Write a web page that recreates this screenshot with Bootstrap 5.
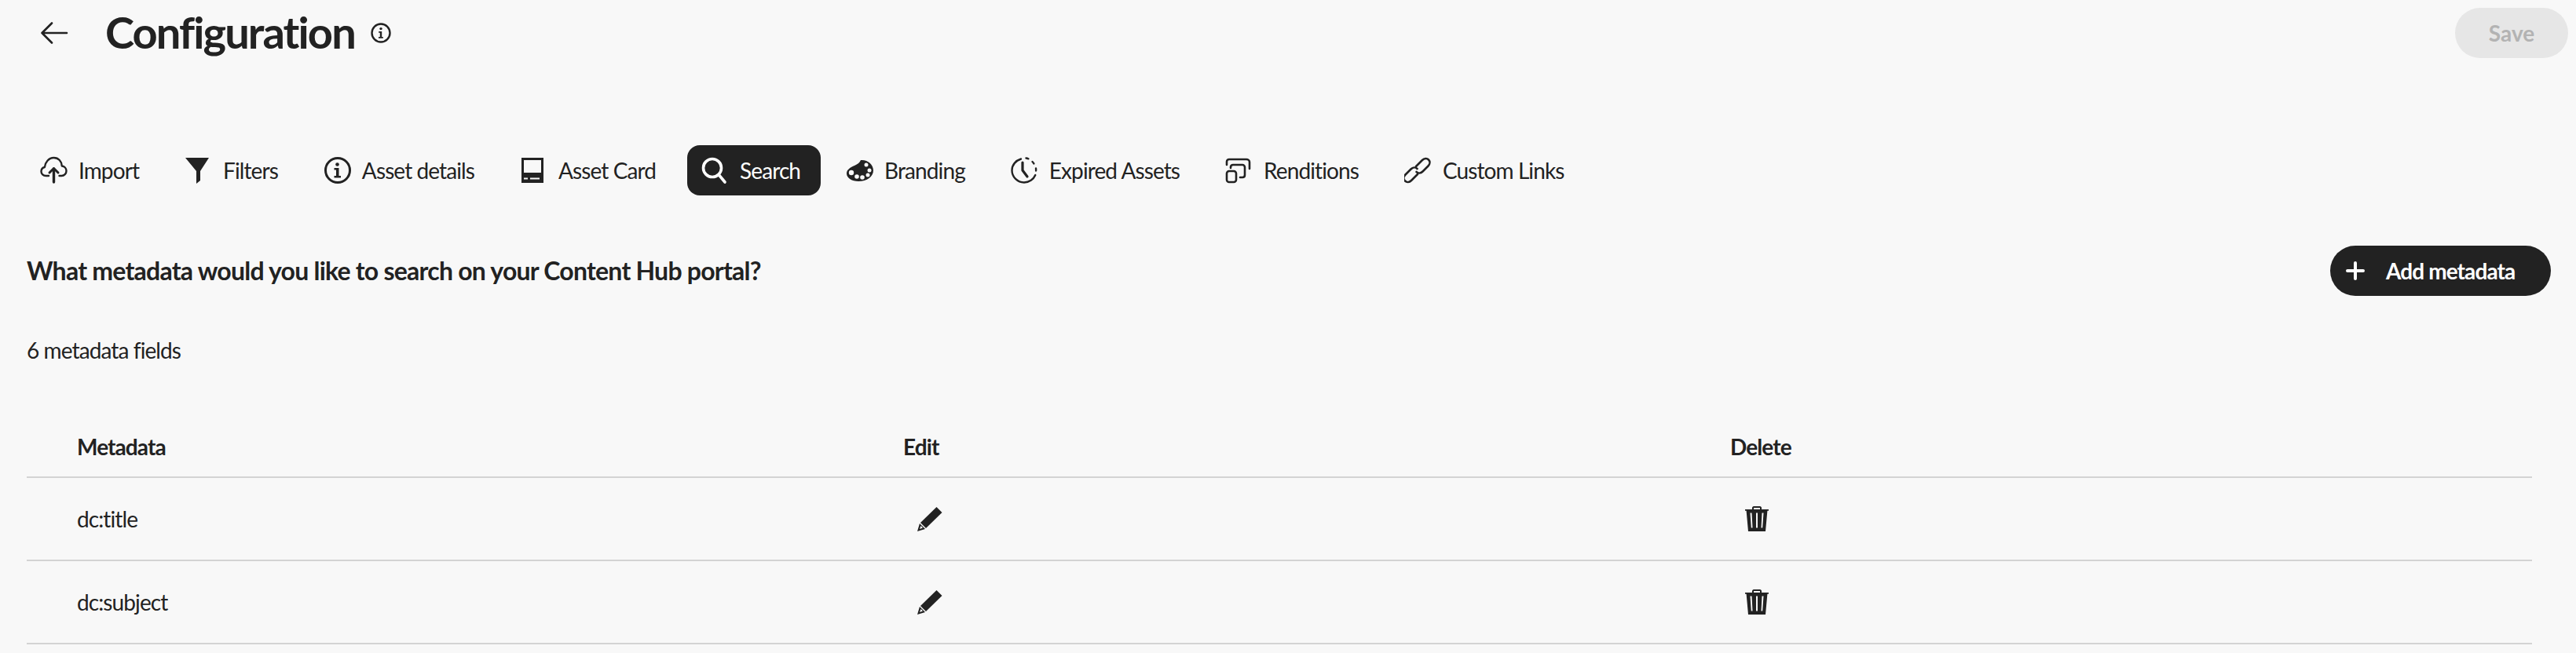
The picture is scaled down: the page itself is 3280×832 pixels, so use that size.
<!DOCTYPE html>
<html lang="en">
<head>
  <meta charset="UTF-8" />
  <title>Configuration</title>
  <link href="https://cdn.jsdelivr.net/npm/bootstrap@5.3.2/dist/css/bootstrap.min.css" rel="stylesheet" />
  <style>
    body {
      background: #f8f8f8;
      color: #222;
      font-family: "Lato", "Noto Sans", sans-serif;
      font-size: 28px;
      letter-spacing: -0.9px;
      overflow: hidden;
      height: 832px;
    }
    .top-bar { height: 185px; padding: 10px 10px 0 52px; }
    .back-link { width: 36px; margin-top: 18px; color: #222; }
    .page-title { font-size: 56px; font-weight: 700; line-height: 62px; letter-spacing: -1.9px; margin: 0 0 0 46px; }
    .title-info { margin: 19px 0 0 20px; }
    .btn-save {
      width: 144px; height: 64px; border-radius: 32px; border: 0;
      background: #e6e6e6; color: #b3b3b3; font-size: 28px; font-weight: 700; padding: 0;
    }
    .tab-row { margin-left: 33px; gap: 14px; margin-bottom: 64px; }
    .tab-item {
      height: 64px; padding: 0 26px 0 18px; border-radius: 16px;
      color: #222; text-decoration: none; gap: 13px;
    }
    .tab-item.is-active { background: #222; color: #fff; }
    .tab-item svg { width: 36px; height: 36px; flex-shrink: 0; }
    .section-head { margin: 0 32px 0 34px; height: 64px; }
    .section-head h2 { font-size: 32px; font-weight: 700; letter-spacing: -0.77px; margin: 0; }
    .btn-add {
      width: 281px; height: 64px; border-radius: 32px; border: 0; background: #222; color: #fff;
      font-size: 28px; font-weight: 700; letter-spacing: -0.9px; padding: 0 0 0 20px; gap: 27px;
    }
    .btn-add:hover { background: #222; color: #fff; }
    .field-count { margin: 48px 0 0 34px; line-height: 42px; }
    .meta-table { width: 3190px; margin: 63px 0 0 34px; table-layout: fixed; --bs-table-bg: transparent; }
    .meta-table th, .meta-table td {
      border-bottom: 2px solid #d3d3d3; vertical-align: middle; padding: 0 0 0 30px; color: #222;
    }
    .meta-table th { height: 78px; font-weight: 700; }
    .meta-table td { height: 106px; }
    .meta-table th:first-child, .meta-table td:first-child { padding-left: 64px; width: 1086px; }
    .meta-table th:nth-child(2), .meta-table td:nth-child(2) { width: 1053px; }
    .cell-icon { margin-left: 18px; display: block; }
    .cell-icon.trash { margin-left: 19px; }
  </style>
</head>
<body>

<header class="top-bar d-flex align-items-start">
  <a class="back-link d-flex" href="#">
    <svg width="36" height="28" viewBox="0 0 36 28" fill="none" stroke="currentColor" stroke-width="2.600" stroke-linecap="round" stroke-linejoin="round"><path d="M1.500 14H33M14 1.500 1.500 14 14 26.500"/></svg>
  </a>
  <h1 class="page-title">Configuration</h1>
  <svg class="title-info" width="26" height="26" viewBox="0 0 26 26"><circle cx="13" cy="13" r="11.500" fill="none" stroke="#222" stroke-width="2.400"/><circle cx="13" cy="7.600" r="1.700" fill="#222"/><path d="M10.200 11h4v7h1.600v1.800H10v-1.800h1.800v-5.200h-1.600z" fill="#222"/></svg>
  <button class="btn-save ms-auto" type="button" disabled>Save</button>
</header>

<nav class="tab-row d-flex">
  <a class="tab-item d-flex align-items-center" href="#">
    <svg viewBox="0 0 36 36" fill="none" stroke="currentColor" stroke-width="2.400" stroke-linecap="round" stroke-linejoin="round"><path d="M11 25H7.500C4 25 1.500 22.400 1.500 19.400c0-2.700 1.800-4.800 4.400-5.400C6.400 8 11 2 17.500 2c6 0 10 4.600 10.300 10.500 3.200.4 5.700 3 5.700 6.300 0 3.400-2.700 6.200-6 6.200h-3"/><path d="M17.500 33V16" stroke-width="3.400"/><path d="M12 21l5.500-5.500L23 21" stroke-width="3"/></svg>
    <span>Import</span>
  </a>
  <a class="tab-item d-flex align-items-center" href="#">
    <svg viewBox="0 0 36 36"><path d="M1 2h30L20 19v12l-5 4V19z" fill="currentColor"/></svg>
    <span>Filters</span>
  </a>
  <a class="tab-item d-flex align-items-center" href="#">
    <svg viewBox="0 0 36 36"><circle cx="18" cy="18" r="15.500" fill="none" stroke="currentColor" stroke-width="3"/><circle cx="17.500" cy="10.500" r="2.300" fill="currentColor"/><path d="M13.500 15h6v10h2.500v2.500h-8.500V25h2.500v-7.500h-2.500z" fill="currentColor"/></svg>
    <span>Asset details</span>
  </a>
  <a class="tab-item d-flex align-items-center" href="#">
    <svg viewBox="0 0 36 36"><path fill-rule="evenodd" d="M2 2h28v32H2zM5 5v16h22V5z" fill="currentColor"/><path d="M5 27.500h5v2H5zM13 27.500h12v2H13z" fill="#f8f8f8"/></svg>
    <span>Asset Card</span>
  </a>
  <a class="tab-item is-active d-flex align-items-center" href="#">
    <svg viewBox="0 0 36 36" fill="none" stroke="currentColor" stroke-linecap="round"><circle cx="14" cy="15" r="11.500" stroke-width="3.600"/><path d="M22.500 24 30 33" stroke-width="3.600"/></svg>
    <span>Search</span>
  </a>
  <a class="tab-item d-flex align-items-center" href="#">
    <svg viewBox="0 0 36 36"><path d="M19 5c-1 3-4 5-8 7-5 2-10 5-10 10 0 6 7 10 15 10 11 0 19-6 19-14C35 10 27 4 19 5z" fill="currentColor"/><g fill="#f8f8f8"><circle cx="26" cy="11" r="2.500"/><circle cx="30" cy="18" r="2.500"/><circle cx="28" cy="24" r="2.500"/><circle cx="21" cy="27" r="2.800"/><circle cx="14" cy="26" r="2.800"/><circle cx="7" cy="21" r="3.200"/></g></svg>
    <span>Branding</span>
  </a>
  <a class="tab-item d-flex align-items-center" href="#">
    <svg viewBox="0 0 36 36" fill="none" stroke="currentColor" stroke-width="2.400" stroke-linecap="round"><path d="M13 3.500C6.500 5.500 1.500 11 1.500 18c0 8.500 7 15.500 15.500 15.500 6.500 0 12-4 14.300-9.500"/><path d="M19.500 2.500c1.500.2 3 .7 4.300 1.400M27.500 7c1 1 1.900 2.300 2.500 3.500M32 15.500c.2 1.300.2 2.600 0 4" stroke-dasharray="3 3"/><path d="M15 8v10l6 8" stroke-width="3.200" stroke-linejoin="round"/></svg>
    <span>Expired Assets</span>
  </a>
  <a class="tab-item d-flex align-items-center" href="#">
    <svg viewBox="0 0 36 36" fill="none" stroke="currentColor" stroke-width="2.600" stroke-linecap="round" stroke-linejoin="round"><path d="M2 11V7c0-2 1.500-3 3-3h22c2 0 4 1.500 4 3.500V16"/><path d="M7 15v-1c0-1.500 1-3 3-3h12c1.500 0 3 1.500 3 3v10c0 2-1.500 3-3 3h-3"/><rect x="2" y="19" width="12" height="14" rx="3"/></svg>
    <span>Renditions</span>
  </a>
  <a class="tab-item d-flex align-items-center" href="#">
    <svg viewBox="0 0 36 36" fill="none" stroke="currentColor" stroke-width="2.600" stroke-linecap="round" stroke-linejoin="round"><path d="M15 13 23 5c2.500-2.500 6-2.500 8-.5s2 5.500-.5 8l-7 7c-2.500 2.500-6 2.500-8 .5"/><path d="M17 23l-8 8c-2.500 2.500-6 2.500-8 .5s-2-5.500.5-8l7-7c2.500-2.500 6-2.500 8-.5"/></svg>
    <span>Custom Links</span>
  </a>
</nav>

<section class="section-head d-flex align-items-center justify-content-between">
  <h2>What metadata would you like to search on your Content Hub portal?</h2>
  <button class="btn btn-add d-flex align-items-center" type="button">
    <svg width="24" height="24" viewBox="0 0 24 24"><path d="M12 2v20M2 12h20" stroke="#fff" stroke-width="4" stroke-linecap="round"/></svg>
    <span>Add metadata</span>
  </button>
</section>

<p class="field-count">6 metadata fields</p>

<table class="table meta-table mb-0">
  <thead>
    <tr><th>Metadata</th><th>Edit</th><th>Delete</th></tr>
  </thead>
  <tbody>
    <tr>
      <td>dc:title</td>
      <td><svg class="cell-icon" width="32" height="32" viewBox="0 0 32 32"><path d="M24.500 1 31.500 8 11 28 4 21z" fill="#222"/><path d="M3 22 10 29 0 32z" fill="#222"/><path d="M4.500 25 7 27.500 3 29z" fill="#f8f8f8"/></svg></td>
      <td><svg class="cell-icon trash" width="30" height="32" viewBox="0 0 30 32"><path d="M0 4h9V2c0-1 1-2 2-2h8c1 0 2 1 2 2v2h9v1.800h-1.600L26 32H4L1.600 5.800H0zM11 4h8V2h-8z" fill="#222"/><path d="M6.500 8.500h2l1 19h-1.700zM14 8.500h2v19h-2zM21.500 8.500h2l-1.300 19h-1.700z" fill="#f8f8f8"/></svg></td>
    </tr>
    <tr>
      <td>dc:subject</td>
      <td><svg class="cell-icon" width="32" height="32" viewBox="0 0 32 32"><path d="M24.500 1 31.500 8 11 28 4 21z" fill="#222"/><path d="M3 22 10 29 0 32z" fill="#222"/><path d="M4.500 25 7 27.500 3 29z" fill="#f8f8f8"/></svg></td>
      <td><svg class="cell-icon trash" width="30" height="32" viewBox="0 0 30 32"><path d="M0 4h9V2c0-1 1-2 2-2h8c1 0 2 1 2 2v2h9v1.800h-1.600L26 32H4L1.600 5.800H0zM11 4h8V2h-8z" fill="#222"/><path d="M6.500 8.500h2l1 19h-1.700zM14 8.500h2v19h-2zM21.500 8.500h2l-1.300 19h-1.700z" fill="#f8f8f8"/></svg></td>
    </tr>
  </tbody>
</table>

<script src="https://cdn.jsdelivr.net/npm/bootstrap@5.3.2/dist/js/bootstrap.bundle.min.js"></script>
</body>
</html>
